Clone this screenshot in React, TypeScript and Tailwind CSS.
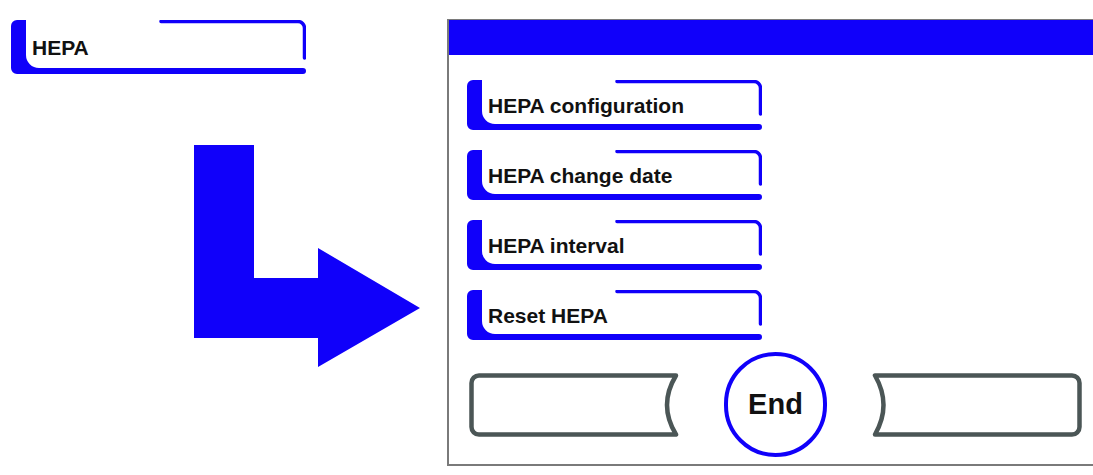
import React from 'react';

const BLUE = '#1000fa';

interface MenuButtonProps {
  label: string;
  height: number;
}

// Blue "tab" style menu button: thick left bar, bottom bar, thin top/right line
const MenuButton = ({ label, height }: MenuButtonProps) => {
  const h = height;
  const fillPath = `M6 0 H15 V${h - 19} A13 13 0 0 0 28 ${h - 6} H292 A3 3 0 0 1 292 ${h} H6 A6 6 0 0 1 0 ${h - 6} V6 A6 6 0 0 1 6 0 Z`;
  const linePath = `M150 1.5 H287 A6.5 6.5 0 0 1 293.5 8 V${h - 16}`;
  return (
    <div className="relative flex w-[295px] shrink-0 items-center pl-[21px]" style={{ height: h }}>
      <svg className="absolute inset-0" width={295} height={h} viewBox={`0 0 295 ${h}`}>
        <path d={fillPath} fill={BLUE} />
        <path d={linePath} fill="none" stroke={BLUE} strokeWidth={3.5} strokeLinecap="round" />
      </svg>
      <span className="relative text-[21px] font-bold leading-none text-[#111]">{label}</span>
    </div>
  );
};

const SoftKey = ({ side }: { side: 'left' | 'right' }) => (
  <svg width={210} height={64} viewBox="0 0 210 64" className="shrink-0">
    {side === 'left' ? (
      <path
        d="M10 2.5 H207 Q189 32 207 61.5 H10 A7.5 7.5 0 0 1 2.5 54 V10 A7.5 7.5 0 0 1 10 2.5 Z"
        fill="white"
        stroke="#4b5656"
        strokeWidth={4.5}
        strokeLinejoin="round"
      />
    ) : (
      <path
        d="M3 2.5 H200 A7.5 7.5 0 0 1 207.5 10 V54 A7.5 7.5 0 0 1 200 61.5 H3 Q20 32 3 2.5 Z"
        fill="white"
        stroke="#4b5656"
        strokeWidth={4.5}
        strokeLinejoin="round"
      />
    )}
  </svg>
);

const items = ['HEPA configuration', 'HEPA change date', 'HEPA interval', 'Reset HEPA'];

export default function App() {
  return (
    <div className="flex h-[475px] w-[1093px] overflow-hidden bg-white font-['Liberation_Sans',Arial,sans-serif]">
      <div className="flex w-[447px] shrink-0 flex-col pl-[11px] pt-[20px]">
        <MenuButton label="HEPA" height={54} />
        <svg className="ml-[183px] mt-[71px]" width={226} height={222} viewBox="0 0 226 222">
          <polygon
            points="0,0 60,0 60,133 124,133 124,103 226,163 124,222 124,193 0,193"
            fill={BLUE}
          />
        </svg>
      </div>

      <div className="mt-[19px] flex h-[447px] flex-1 flex-col border-t border-b-2 border-l-2 border-[#7a7a7a]">
        <div className="h-[35px] shrink-0 bg-[#1000fa]" />
        <div className="flex flex-col gap-[20px] pl-[18px] pt-[25px]">
          {items.map((item) => (
            <MenuButton key={item} label={item} height={50} />
          ))}
        </div>
        <div className="mt-[12px] flex items-center gap-[45px] pl-[20px]">
          <SoftKey side="left" />
          <div className="flex h-[105px] w-[103px] shrink-0 items-center justify-center rounded-full border-[4px] border-[#1000fa]">
            <span className="text-[29px] font-bold leading-none text-[#111]">End</span>
          </div>
          <SoftKey side="right" />
        </div>
      </div>
    </div>
  );
}
